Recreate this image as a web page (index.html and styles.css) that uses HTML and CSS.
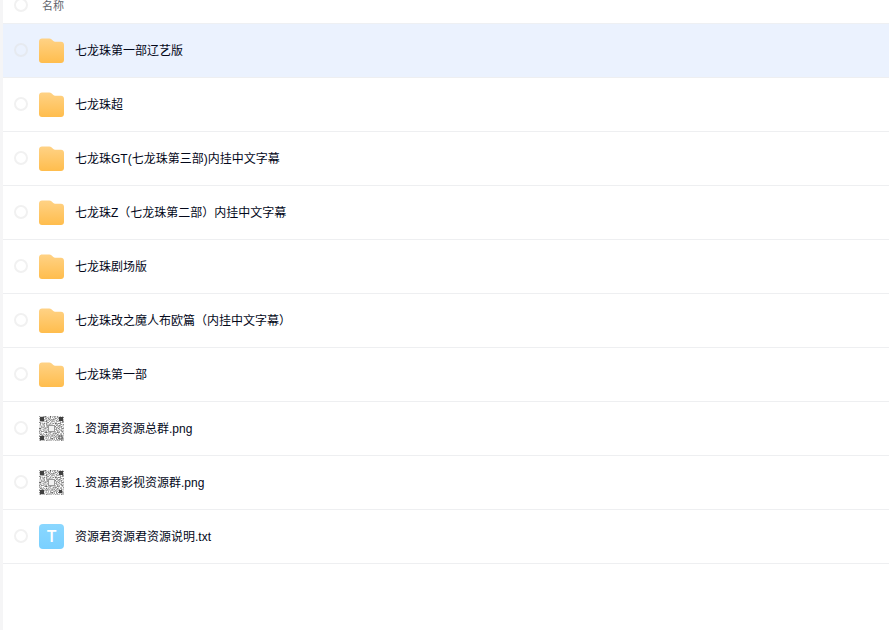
FILE: index.html
```html
<!DOCTYPE html>
<html lang="zh-CN">
<head>
<meta charset="utf-8">
<title>文件列表</title>
<link rel="stylesheet" href="styles.css">
</head>
<body>
<svg class="defs" width="0" height="0" aria-hidden="true">
  <defs>
    <linearGradient id="folderFill" x1="0" y1="0" x2="0" y2="1">
      <stop offset="0" stop-color="#ffd285"/>
      <stop offset="1" stop-color="#ffbd4d"/>
    </linearGradient>
    <filter id="qrNoise" x="0" y="0" width="100%" height="100%" color-interpolation-filters="sRGB">
      <feTurbulence type="fractalNoise" baseFrequency="0.8" numOctaves="2" seed="7"/>
      <feColorMatrix type="matrix" values="1.3 0 0 0 0.12 1.3 0 0 0 0.12 1.3 0 0 0 0.12 0 0 0 0 1"/>
      <feGaussianBlur stdDeviation="0.35"/>
    </filter>
    <filter id="qrSoft" x="-10%" y="-10%" width="120%" height="120%">
      <feGaussianBlur stdDeviation="0.45"/>
    </filter>
    <symbol id="folder" viewBox="0 0 25 25">
      <path fill="url(#folderFill)" d="M3 0.5h7.2c1 0 1.8 .4 2.5 1l1.6 1.5c.5 .5 1.1 .7 1.8 .7H22c1.700 0 3 1.300 3 3V22c0 1.700-1.300 3-3 3H3c-1.700 0-3-1.300-3-3V3.500c0-1.700 1.300-3 3-3z"/>
    </symbol>
    <symbol id="qr-a" viewBox="0 0 25 25">
      <rect x="0.500" y="0.500" width="24" height="24" fill="#bbb" filter="url(#qrNoise)"/>
      <g filter="url(#qrSoft)">
        <g fill="#3f3f3f">
          <rect x="1" y="1" width="4" height="4"/>
          <rect x="20" y="1" width="4" height="4"/>
          <rect x="1" y="20" width="4" height="4"/>
        </g>
        <rect x="20" y="20" width="3" height="3" fill="#ddd" stroke="#555"/>
        <rect x="9.500" y="9.500" width="6" height="6" fill="#f2f2f2" stroke="#999"/>
      </g>
    </symbol>
    <symbol id="qr-b" viewBox="0 0 25 25">
      <rect x="0.500" y="0.500" width="24" height="24" fill="#bbb" filter="url(#qrNoise)"/>
      <g filter="url(#qrSoft)">
        <g fill="#3f3f3f">
          <rect x="1" y="1" width="4" height="4"/>
          <rect x="20" y="1" width="4" height="4"/>
          <rect x="1" y="20" width="4" height="4"/>
          <rect x="20" y="20" width="3" height="3"/>
        </g>
        <rect x="9.500" y="9.500" width="6" height="6" fill="#f2f2f2" stroke="#999"/>
      </g>
    </symbol>
  </defs>
</svg>
<main class="list">
  <div class="header">
    <span class="check"></span>
    <span class="header-name">名称</span>
  </div>
  <div class="row row-selected">
    <span class="check"></span>
    <svg class="icon"><use href="#folder"/></svg>
    <span class="name">七龙珠第一部辽艺版</span>
  </div>
  <div class="row">
    <span class="check"></span>
    <svg class="icon"><use href="#folder"/></svg>
    <span class="name">七龙珠超</span>
  </div>
  <div class="row">
    <span class="check"></span>
    <svg class="icon"><use href="#folder"/></svg>
    <span class="name">七龙珠GT(七龙珠第三部)内挂中文字幕</span>
  </div>
  <div class="row">
    <span class="check"></span>
    <svg class="icon"><use href="#folder"/></svg>
    <span class="name">七龙珠Z（七龙珠第二部）内挂中文字幕</span>
  </div>
  <div class="row">
    <span class="check"></span>
    <svg class="icon"><use href="#folder"/></svg>
    <span class="name">七龙珠剧场版</span>
  </div>
  <div class="row">
    <span class="check"></span>
    <svg class="icon"><use href="#folder"/></svg>
    <span class="name">七龙珠改之魔人布欧篇（内挂中文字幕）</span>
  </div>
  <div class="row">
    <span class="check"></span>
    <svg class="icon"><use href="#folder"/></svg>
    <span class="name">七龙珠第一部</span>
  </div>
  <div class="row">
    <span class="check"></span>
    <svg class="icon"><use href="#qr-a"/></svg>
    <span class="name">1.资源君资源总群.png</span>
  </div>
  <div class="row">
    <span class="check"></span>
    <svg class="icon"><use href="#qr-b"/></svg>
    <span class="name">1.资源君影视资源群.png</span>
  </div>
  <div class="row">
    <span class="check"></span>
    <span class="icon icon-txt">T</span>
    <span class="name">资源君资源君资源说明.txt</span>
  </div>
</main>
</body>
</html>
```
FILE: styles.css
```css
html, body {
  margin: 0;
  height: 100%;
  overflow: hidden;
  background: #fff;
}

body {
  font-family: "Liberation Sans", "Noto Sans CJK SC", sans-serif;
  font-size: 12px;
  color: #03081a;
}

.defs {
  display: block;
  height: 0;
}

.list {
  margin: -14px 0 0 3px;
  height: 644px;
  background: #fff;
  box-shadow: -3px 0 0 #f5f5f6;
}

.header {
  display: flex;
  align-items: center;
  box-sizing: border-box;
  height: 38px;
  padding: 1px 0 0 11px;
  border-bottom: 1px solid #eef0f3;
}

.header-name {
  margin-left: 14px;
  font-size: 11px;
  color: #60636b;
}

.row {
  display: flex;
  align-items: center;
  height: 53px;
  padding-left: 11px;
  border-bottom: 1px solid #eeeff1;
}

.row-selected {
  background: #ebf2fe;
}

.check {
  flex: none;
  box-sizing: border-box;
  width: 14px;
  height: 14px;
  margin-bottom: 1px;
  border: 2px solid #f1f1f1;
  border-radius: 50%;
}

.row-selected .check {
  border-color: #e6eaf0;
}

.icon {
  flex: none;
  display: block;
  width: 25px;
  height: 25px;
  margin-left: 11px;
}

.icon-txt {
  display: flex;
  align-items: center;
  justify-content: center;
  border-radius: 4px;
  background: linear-gradient(#8ad7ff, #7ad0ff);
  color: #fff;
  font-family: Roboto, sans-serif;
  font-size: 16px;
  font-weight: 500;
}

.name {
  margin-left: 11px;
  margin-bottom: 2px;
  white-space: nowrap;
}
```
